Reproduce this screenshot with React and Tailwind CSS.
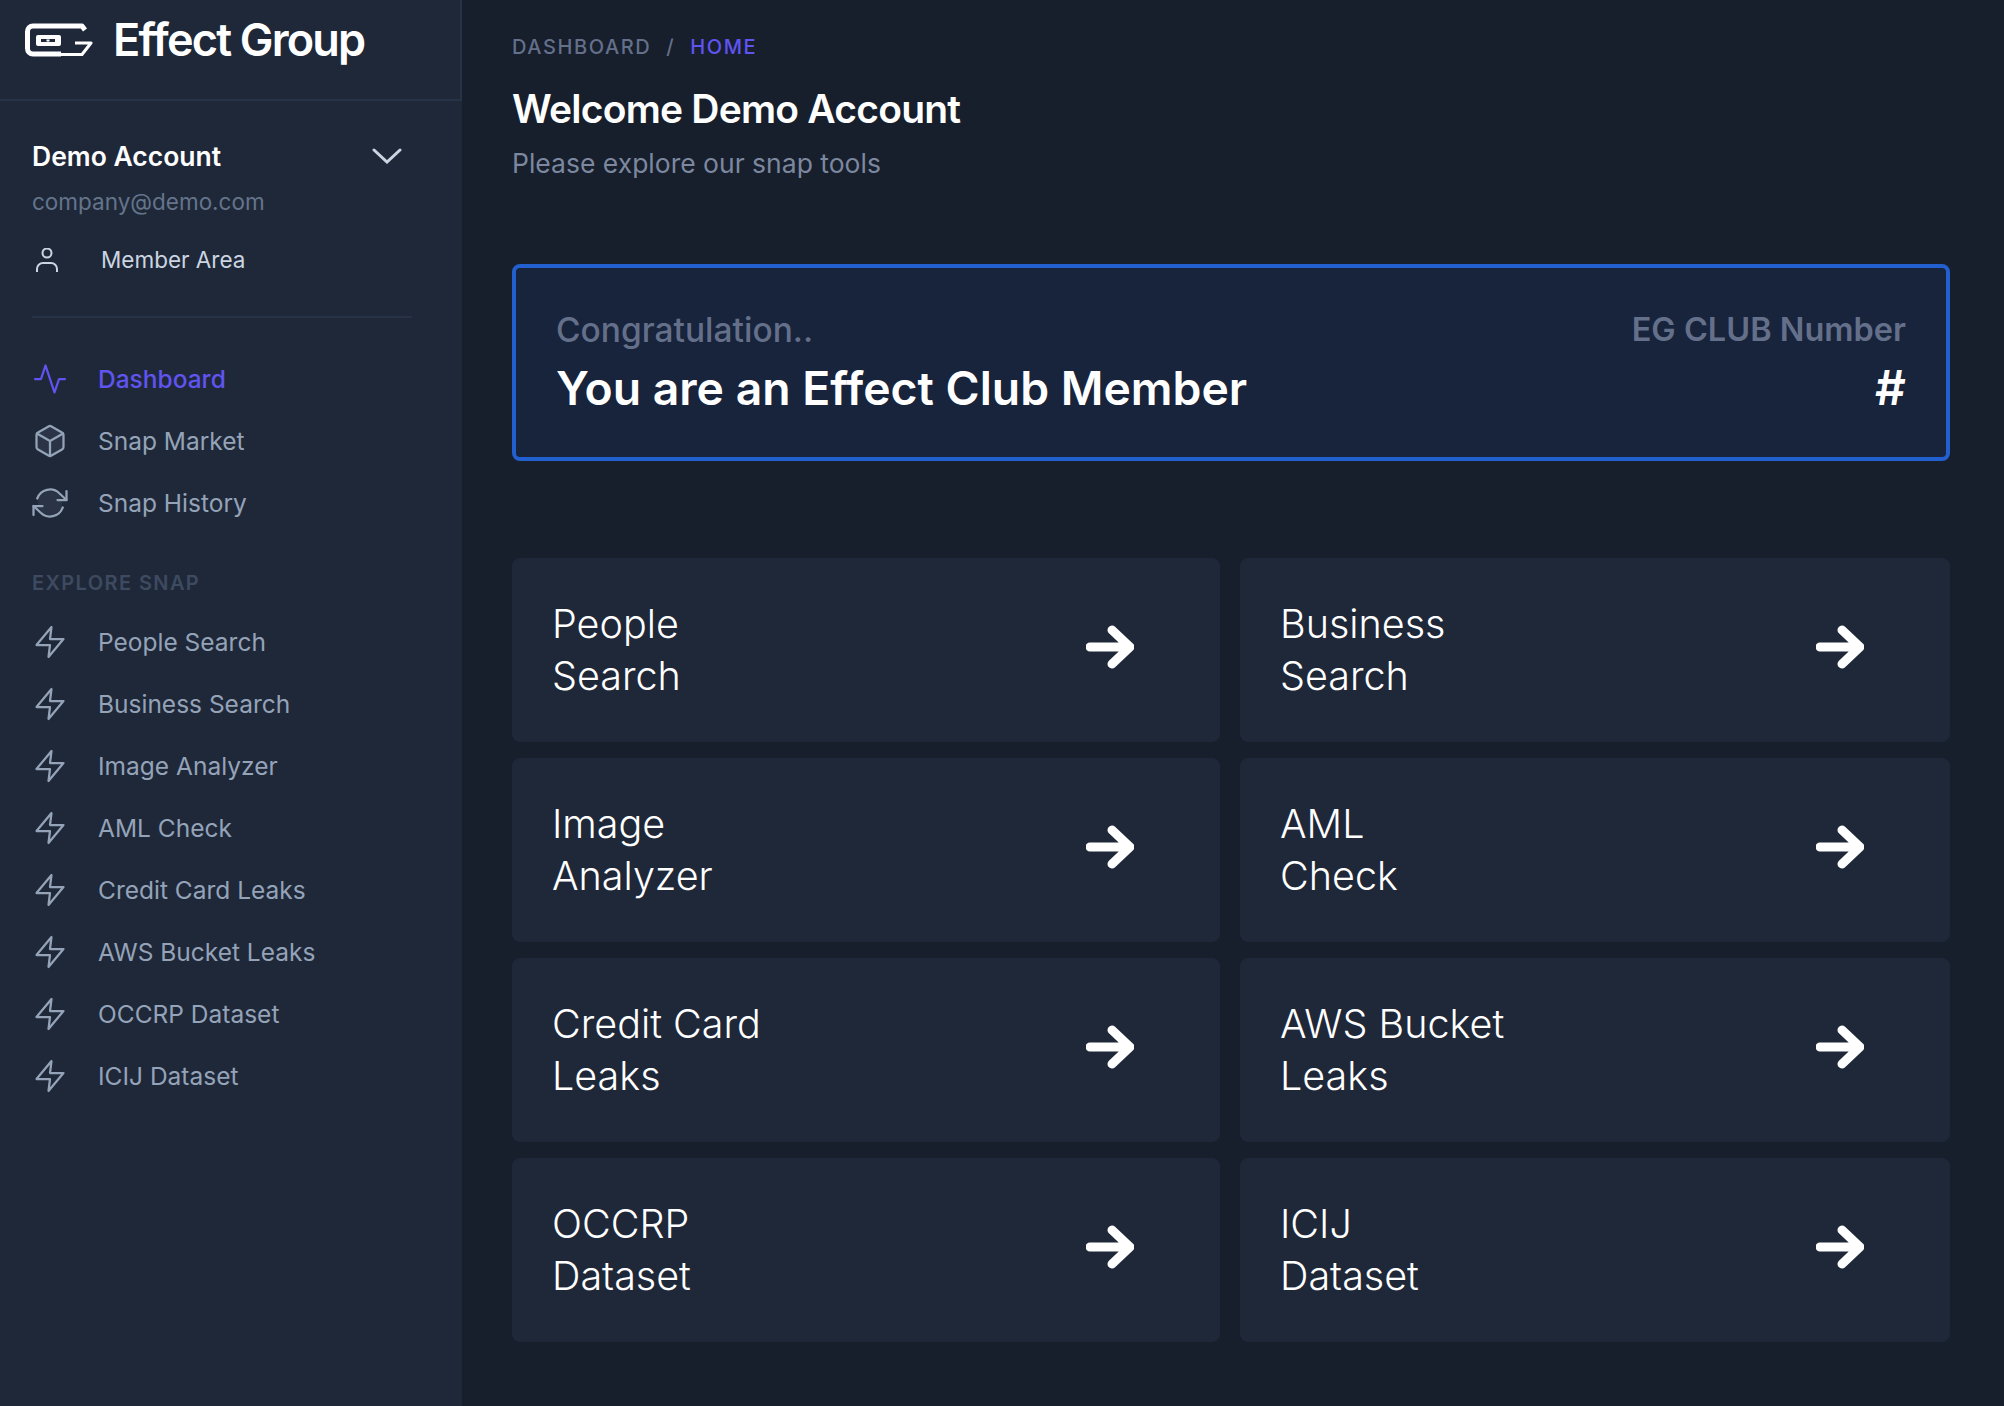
import React from "react";

const FONT = { fontFamily: '"Inter", "Noto Sans", sans-serif' };

const SNAP_LINKS = [
  "People Search",
  "Business Search",
  "Image Analyzer",
  "AML Check",
  "Credit Card Leaks",
  "AWS Bucket Leaks",
  "OCCRP Dataset",
  "ICIJ Dataset",
];

const CARDS = [
  ["People", "Search"],
  ["Business", "Search"],
  ["Image", "Analyzer"],
  ["AML", "Check"],
  ["Credit Card", "Leaks"],
  ["AWS Bucket", "Leaks"],
  ["OCCRP", "Dataset"],
  ["ICIJ", "Dataset"],
];

function Icon({ children, className = "" }) {
  return (
    <svg
      viewBox="0 0 24 24"
      fill="none"
      stroke="currentColor"
      strokeWidth="1.5"
      strokeLinecap="round"
      strokeLinejoin="round"
      className={`w-9 h-9 shrink-0 ${className}`}
    >
      {children}
    </svg>
  );
}

const ActivityIcon = () => (
  <Icon>
    <polyline points="22 12 18 12 15 21 9 3 6 12 2 12" />
  </Icon>
);

const BoxIcon = () => (
  <Icon>
    <path fill="currentColor" fillOpacity="0.1" d="M21 16V8a2 2 0 0 0-1-1.73l-7-4a2 2 0 0 0-2 0l-7 4A2 2 0 0 0 3 8v8a2 2 0 0 0 1 1.73l7 4a2 2 0 0 0 2 0l7-4A2 2 0 0 0 21 16z" />
    <polyline points="3.27 6.96 12 12.01 20.73 6.96" />
    <line x1="12" y1="22.08" x2="12" y2="12" />
  </Icon>
);

const RefreshIcon = () => (
  <Icon>
    <circle cx="12" cy="12" r="8" fill="currentColor" fillOpacity="0.1" stroke="none" />
    <polyline points="23 4 23 10 17 10" />
    <polyline points="1 20 1 14 7 14" />
    <path d="M3.51 9a9 9 0 0 1 14.85-3.36L23 10M1 14l4.64 4.36A9 9 0 0 0 20.49 15" />
  </Icon>
);

const ZapIcon = () => (
  <Icon>
    <polygon points="13 2 3 14 12 14 11 22 21 10 12 10 13 2" />
  </Icon>
);

function ArrowIcon() {
  return (
    <svg viewBox="0 0 48 48" fill="none" stroke="white" strokeWidth="9" strokeLinecap="round" strokeLinejoin="round" className="w-12 h-12 shrink-0 -mt-1.5">
      <path d="M4 24H43M26 7L44 24L26 41" />
    </svg>
  );
}

function Logo() {
  return (
    <svg viewBox="0 0 68 34" fill="none" className="w-[68px] h-[34px] shrink-0">
      <path d="M60 7L57 3H8a5.5 5.5 0 0 0-5.5 5.5v17a5.5 5.5 0 0 0 5.5 5.5H36" stroke="white" strokeWidth="5" strokeLinejoin="round" />
      <path d="M36 31.5H57L66 20H50" stroke="white" strokeWidth="3" strokeLinejoin="round" />
      <rect x="11" y="12" width="25" height="11" rx="2" fill="white" />
      <rect x="16" y="16" width="14" height="3" fill="#1f2839" />
      <rect x="21.5" y="16.5" width="3" height="2" fill="white" />
    </svg>
  );
}

function NavItem({ icon, label, active }) {
  return (
    <div className={`flex items-center h-[62px] gap-[30px] text-[24.5px] ${active ? "text-[#6054f0] font-medium" : "text-[#94a3b8]"}`}>
      {icon}
      <span>{label}</span>
    </div>
  );
}

export default function App() {
  return (
    <div className="flex w-full min-h-[1406px] bg-[#171e2c]" style={FONT}>
      <aside className="w-[462px] shrink-0 bg-[#1f2839]">
        <div className="h-[101px] flex items-start gap-5 pl-[25px] pr-4 border-b-2 border-r-2 border-[#263347]">
          <div className="mt-[23px]">
            <Logo />
          </div>
          <span className="text-white text-[45px] leading-[79px] font-semibold tracking-[-0.04em]">Effect Group</span>
        </div>

        <div className="px-8">
          <div className="flex items-center justify-between pt-[39px] pr-7">
            <span className="text-white text-[26.5px] leading-8 font-semibold">Demo Account</span>
            <svg viewBox="0 0 30 16" fill="none" stroke="#cbd5e1" strokeWidth="3" strokeLinecap="round" className="w-[30px] h-4">
              <path d="M2 2L15 14L28 2" />
            </svg>
          </div>
          <div className="mt-[14px] text-[#64748b] text-[22.5px] leading-8">company@demo.com</div>
          <div className="flex items-center mt-[26px] h-8 pl-1">
            <svg viewBox="0 0 22 24" fill="none" stroke="#cbd5e1" strokeWidth="2" className="w-[22px] h-6 shrink-0">
              <circle cx="11" cy="5" r="4.5" />
              <path d="M1 24v-3a6 6 0 0 1 6-6h8a6 6 0 0 1 6 6v3" />
            </svg>
            <span className="ml-[43px] text-[#cbd5e1] text-[22.5px]">Member Area</span>
          </div>
          <div className="mt-[40px] w-[380px] h-0.5 bg-[#263347]" />

          <div className="mt-[30px]">
            <NavItem icon={<ActivityIcon />} label="Dashboard" active />
            <NavItem icon={<BoxIcon />} label="Snap Market" />
            <NavItem icon={<RefreshIcon />} label="Snap History" />
          </div>

          <div className="mt-[35px] mb-[14px] text-[#3d4a60] text-[20px] leading-7 font-semibold tracking-[0.07em]">EXPLORE SNAP</div>

          {SNAP_LINKS.map((label) => (
            <NavItem key={label} icon={<ZapIcon />} label={label} />
          ))}
        </div>
      </aside>

      <main className="flex-1 pl-[50px] pr-[54px]">
        <div className="flex items-center pt-[33px] text-[20px] leading-7 font-medium tracking-[0.08em]">
          <span className="text-[#64708a]">DASHBOARD</span>
          <span className="text-[#64708a] mx-[15px]">/</span>
          <span className="text-[#6054f0]">HOME</span>
        </div>
        <h1 className="mt-[22px] text-white text-[39px] leading-[52px] font-semibold tracking-[-0.02em]">Welcome Demo Account</h1>
        <p className="mt-[10px] text-[#7c889f] text-[26.5px] leading-9">Please explore our snap tools</p>

        <div className="mt-[83px] h-[197px] border-4 border-[#2260d0] rounded-lg bg-[#18233c] flex justify-between px-[40px] pt-[40px]">
          <div>
            <div className="text-[#64708a] text-[33.5px] leading-[44px] font-medium">Congratulation..</div>
            <div className="mt-[4px] text-white text-[46.3px] leading-[64px] font-semibold">You are an Effect Club Member</div>
          </div>
          <div className="text-right">
            <div className="text-[#64708a] text-[32.5px] leading-[44px] font-semibold">EG CLUB Number</div>
            <div className="mt-[4px] text-white text-[48px] leading-[64px] font-semibold">#</div>
          </div>
        </div>

        <div className="mt-[97px] grid grid-cols-[708px_710px] gap-x-5 gap-y-4">
          {CARDS.map(([first, second]) => (
            <div key={first + second} className="h-[184px] rounded-lg bg-[#1f2839] flex items-center justify-between pl-10 pr-[86px]">
              <div className="text-white text-[39.5px] leading-[52px] font-light">
                <div>{first}</div>
                <div>{second}</div>
              </div>
              <ArrowIcon />
            </div>
          ))}
        </div>
      </main>
    </div>
  );
}
